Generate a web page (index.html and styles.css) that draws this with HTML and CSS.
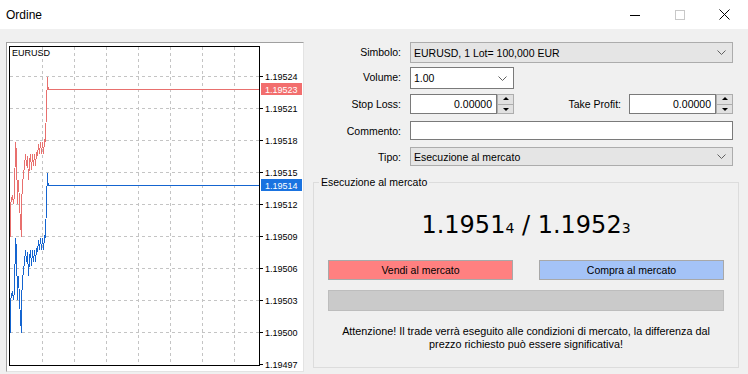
FILE: index.html
```html
<!DOCTYPE html>
<html lang="it">
<head>
<meta charset="UTF-8">
<meta name="viewport" content="width=device-width, initial-scale=1.0">
<title>Ordine</title>
<link rel="stylesheet" href="styles.css">
</head>
<body>
<!-- barra del titolo -->
<div class="titlebar">
  <span class="title">Ordine</span>
  <div class="caption-buttons">
    <span class="cap-btn"><svg width="10" height="10" viewBox="0 0 10 10"><path d="M0 5.5H10" stroke="#000" stroke-width="1"/></svg></span>
    <span class="cap-btn"><svg width="10" height="10" viewBox="0 0 10 10"><rect x="0.5" y="0.5" width="9" height="9" fill="none" stroke="#c8c8c8"/></svg></span>
    <span class="cap-btn"><svg width="11" height="11" viewBox="0 0 11 11"><path d="M0.5 0.5L10.5 10.5M10.5 0.5L0.5 10.5" stroke="#000" stroke-width="1"/></svg></span>
  </div>
</div>

<div class="content">
  <!-- grafico tick -->
  <div class="chart-panel">
    <svg class="chart" width="296" height="328" viewBox="7 43 296 328" shape-rendering="crispEdges">
      <path class="grid" d="M42.5 47V365M74.5 47V365M106.5 47V365M138.5 47V365M170.5 47V365M202.5 47V365M234.5 47V365
        M10 76.5H259M10 108.5H259M10 140.5H259M10 172.5H259M10 204.5H259M10 236.5H259M10 268.5H259M10 300.5H259M10 332.5H259"/>
      <rect x="9.5" y="46.5" width="250" height="319" fill="none" stroke="#000"/>
      <path class="ticks" d="M259 76.5H263M259 108.5H263M259 140.5H263M259 172.5H263M259 204.5H263M259 236.5H263M259 268.5H263M259 300.5H263M259 332.5H263M259 364.5H263"/>
      <polyline class="ask-line" points="10.5,237 10.5,204 11.5,200 12.5,195 13.5,204 14.5,195 15.5,142 16.5,154 17.5,204 18.5,180 19.5,204 20.5,222 21.5,237 21.5,204 22.5,184 23.5,174 24.5,166 25.5,154 26.5,166 27.5,156 28.5,180 29.5,162 30.5,154 31.5,170 32.5,154 33.5,166 34.5,154 35.5,166 36.5,152 37.5,156 38.5,144 39.5,154 40.5,142 41.5,154 42.5,142 43.5,154 44.5,140 45.5,142 46.5,104 47.5,77 47.5,85 48.5,89.5 259,89.5"/>
      <polyline class="bid-line" points="10.5,333 10.5,300 11.5,296 12.5,291 13.5,300 14.5,291 15.5,238 16.5,250 17.5,300 18.5,276 19.5,300 20.5,318 21.5,333 21.5,300 22.5,280 23.5,270 24.5,262 25.5,250 26.5,262 27.5,252 28.5,276 29.5,258 30.5,250 31.5,266 32.5,250 33.5,262 34.5,250 35.5,262 36.5,248 37.5,252 38.5,240 39.5,250 40.5,238 41.5,250 42.5,238 43.5,250 44.5,236 45.5,238 46.5,200 47.5,173 47.5,181 48.5,185.5 259,185.5"/>
      <text class="symbol" x="12" y="56">EURUSD</text>
      <g class="axis">
        <text x="265" y="80">1.19524</text>
        <text x="265" y="112">1.19521</text>
        <text x="265" y="144">1.19518</text>
        <text x="265" y="176">1.19515</text>
        <text x="265" y="208">1.19512</text>
        <text x="265" y="240">1.19509</text>
        <text x="265" y="272">1.19506</text>
        <text x="265" y="304">1.19503</text>
        <text x="265" y="336">1.19500</text>
        <text x="265" y="368">1.19497</text>
      </g>
      <rect class="ask-tag" x="261" y="83" width="41" height="12"/>
      <text class="tag-text" x="265" y="92.5">1.19523</text>
      <rect class="bid-tag" x="261" y="179" width="41" height="12"/>
      <text class="tag-text" x="265" y="188.5">1.19514</text>
    </svg>
  </div>

  <!-- modulo ordine -->
  <div class="order-form">
    <div class="fields">
      <span class="lbl">Simbolo:</span>
      <div class="combo combo-gray h21">EURUSD, 1 Lot= 100,000 EUR<svg class="chev" width="9" height="5" viewBox="0 0 9 5"><polyline points="0.5,0.5 4.5,4.5 8.5,0.5"/></svg></div>

      <span class="lbl">Volume:</span>
      <div class="combo combo-white volume">1.00<svg class="chev" width="9" height="5" viewBox="0 0 9 5"><polyline points="0.5,0.5 4.5,4.5 8.5,0.5"/></svg></div>

      <span class="lbl">Stop Loss:</span>
      <div class="sl-row">
        <div class="spin-field">
          <div class="num-input">0.00000</div>
          <div class="spinner"><span class="up"></span><span class="down"></span></div>
        </div>
        <span class="lbl tp-lbl">Take Profit:</span>
        <div class="spin-field">
          <div class="num-input">0.00000</div>
          <div class="spinner"><span class="up"></span><span class="down"></span></div>
        </div>
      </div>

      <span class="lbl">Commento:</span>
      <div class="text-input"></div>

      <span class="lbl">Tipo:</span>
      <div class="combo combo-gray h19">Esecuzione al mercato<svg class="chev" width="9" height="5" viewBox="0 0 9 5"><polyline points="0.5,0.5 4.5,4.5 8.5,0.5"/></svg></div>
    </div>

    <fieldset class="group">
      <legend>Esecuzione al mercato</legend>
      <div class="quote">1.1951<small>4</small> / 1.1952<small>3</small></div>
      <div class="trade-buttons">
        <button class="btn sell">Vendi al mercato</button>
        <button class="btn buy">Compra al mercato</button>
      </div>
      <div class="progress"></div>
      <p class="warning">Attenzione! Il trade verrà eseguito alle condizioni di mercato, la differenza dal<br>prezzo richiesto può essere significativa!</p>
    </fieldset>
  </div>
</div>
</body>
</html>
```

FILE: styles.css
```css
/* base della finestra */
html, body {
  margin: 0;
  padding: 0;
  width: 748px;
  height: 374px;
  overflow: hidden;
  background: #f0f0f0;
  font-family: "Liberation Sans", Arial, sans-serif;
  font-size: 10.5px;
  color: #000;
}
/* barra del titolo */
.titlebar {
  height: 29px;
  background: #fff;
  display: flex;
  align-items: center;
  justify-content: space-between;
}
.titlebar .title {
  font-size: 12px;
  padding-left: 6px;
  padding-top: 1px;
}
.caption-buttons {
  display: flex;
  height: 100%;
  padding-right: 1px;
}
.cap-btn {
  width: 45px;
  display: flex;
  align-items: center;
  justify-content: center;
}
.content {
  display: flex;
  padding: 13px 0 0 6px;
  gap: 9px;
}
/* pannello del grafico */
.chart-panel {
  width: 298px;
  height: 330px;
  box-sizing: border-box;
  background: #fff;
  border: 1px solid;
  border-color: #a0a0a0 #e3e3e3 #e3e3e3 #a0a0a0;
}
.chart {
  display: block;
}
.chart .grid {
  stroke: #c4c4c4;
  stroke-dasharray: 3 3;
  fill: none;
}
.chart .ticks {
  stroke: #000;
}
.chart .ask-line {
  fill: none;
  stroke: #e8706e;
  stroke-width: 1;
}
.chart .bid-line {
  fill: none;
  stroke: #1565d0;
  stroke-width: 1;
}
.chart text {
  font-family: "Liberation Sans", Arial, sans-serif;
  font-size: 9px;
  fill: #000;
}
.chart .ask-tag { fill: #f26e6e; }
.chart .bid-tag { fill: #1a73e0; }
.chart .tag-text { fill: #fff; }
/* modulo ordine */
.order-form {
  width: 426px;
}
.fields {
  display: grid;
  grid-template-columns: 88px 323px;
  grid-template-rows: 25px 27px 27px 26px 20px;
  column-gap: 9px;
  align-items: start;
}
.lbl {
  text-align: right;
  line-height: 20px;
  white-space: nowrap;
}
.combo {
  box-sizing: border-box;
  display: flex;
  align-items: center;
  justify-content: space-between;
  padding: 0 6px 0 3px;
}
.combo-gray {
  background: #e5e5e5;
  border: 1px solid #acacac;
}
.combo-white {
  background: #fff;
  border: 1px solid #7a7a7a;
}
.h21 { height: 21px; }
.h19 { height: 19px; }
.volume {
  width: 104px;
  height: 22px;
}
.chev polyline {
  fill: none;
  stroke: #606060;
  stroke-width: 1;
}
.sl-row {
  display: flex;
  align-items: center;
  height: 20px;
}
.tp-lbl {
  flex: 1;
  padding-right: 8px;
}
.spin-field {
  display: flex;
  height: 20px;
}
.num-input {
  width: 87px;
  box-sizing: border-box;
  background: #fff;
  border: 1px solid #7a7a7a;
  text-align: right;
  padding-right: 4px;
  line-height: 18px;
}
.spinner {
  width: 17px;
  box-sizing: border-box;
  border: 1px solid #adadad;
  background: #e1e1e1;
  display: flex;
  flex-direction: column;
}
.spinner span {
  flex: 1;
  position: relative;
}
.spinner .up {
  border-bottom: 1px solid #adadad;
}
.spinner span::after {
  content: "";
  position: absolute;
  left: 5px;
  border-left: 3px solid transparent;
  border-right: 3px solid transparent;
}
.spinner .up::after {
  top: 2px;
  border-bottom: 3px solid #000;
}
.spinner .down::after {
  top: 3px;
  border-top: 3px solid #000;
}
.text-input {
  height: 19px;
  box-sizing: border-box;
  background: #fff;
  border: 1px solid #7a7a7a;
}
/* riquadro esecuzione */
.group {
  margin: 9px 0 0 0;
  padding: 0 14px;
  border: 1px solid #dcdcdc;
  height: 192px;
  box-sizing: border-box;
  width: 426px;
}
.group legend {
  padding: 0 2px;
  margin-left: -9px;
  line-height: 12px;
}
.quote {
  font-family: "DejaVu Sans", Verdana, sans-serif;
  font-size: 24px;
  line-height: 28px;
  text-align: center;
  margin-top: 23px;
}
.quote small {
  font-size: 14px;
}
.trade-buttons {
  display: flex;
  justify-content: space-between;
  margin-top: 18px;
}
.btn {
  width: 185px;
  height: 20px;
  border: 1px solid #a8a8a8;
  font-family: inherit;
  font-size: 10.5px;
  padding: 0;
  color: #000;
}
.btn.sell { background: #ff8080; }
.btn.buy { background: #a4c3f7; }
.progress {
  margin-top: 10px;
  height: 21px;
  box-sizing: border-box;
  background: #cacaca;
  border: 1px solid #bdbdbd;
}
.warning {
  margin: 14px 0 0;
  text-align: center;
  font-size: 10.8px;
  line-height: 12.5px;
}
```
